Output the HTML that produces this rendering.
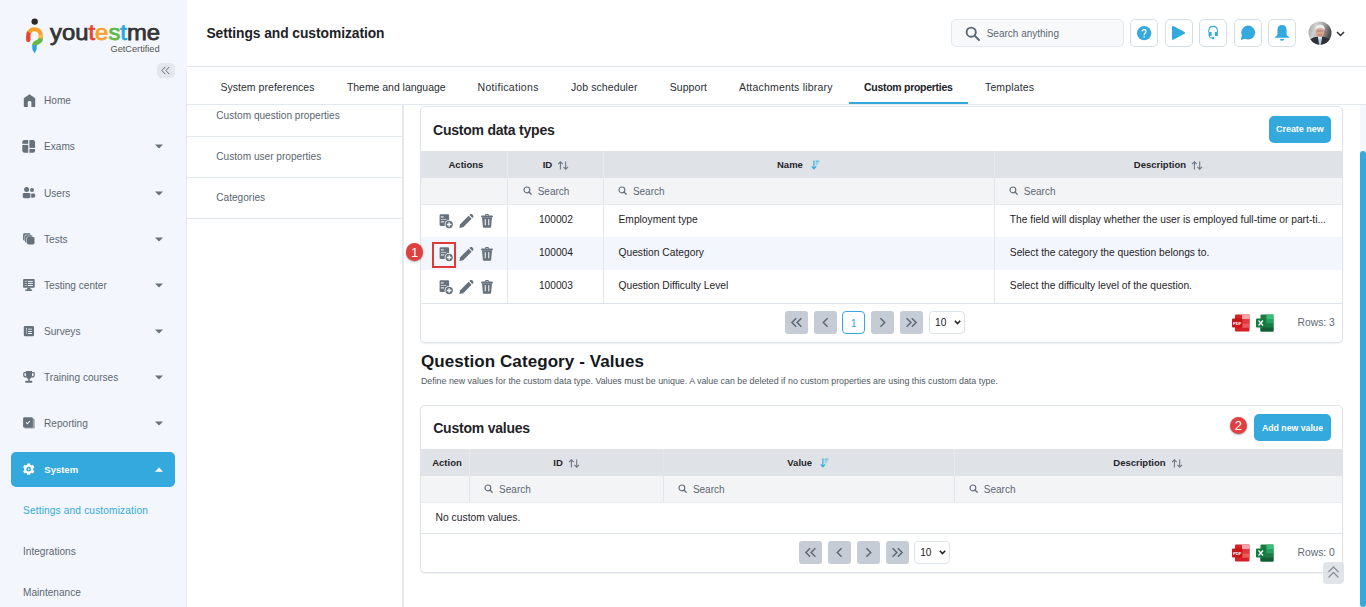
<!DOCTYPE html>
<html><head><meta charset="utf-8"><style>
html,body{margin:0;padding:0;width:1366px;height:607px;overflow:hidden;background:#fff;font-family:"Liberation Sans", sans-serif}
.t{position:absolute;white-space:nowrap;line-height:1;font-family:"Liberation Sans", sans-serif}
.r{position:absolute;display:block}
</style></head><body>
<div class="r" style="left:0px;top:0px;width:187px;height:607px;background:#f3f6fc"></div>
<div class="r" style="left:186px;top:72px;width:1px;height:535px;background:#e6eaf0"></div>
<svg class="r" style="left:24px;top:16px" width="22" height="40" viewBox="0 0 22 40">
<circle cx="10.7" cy="5.6" r="3.2" fill="#2b2b2b"/>
<path d="M5.13 16.4 A6.2 6.2 0 0 0 4.3 19.5 L4.3 24" stroke="#e8432f" stroke-width="4.3" stroke-linecap="round"/>
<path d="M5.13 16.4 A6.2 6.2 0 0 1 16.7 19.5" stroke="#f7a12b" stroke-width="4" fill="none"/>
<path d="M16.7 19.3 L16.7 22.5" stroke="#fbbd33" stroke-width="4.6"/>
<path d="M16.7 22.3 Q16.7 25 13.5 26.3 Q10.5 27.3 10.5 29.5" stroke="#64b946" stroke-width="4.6" fill="none"/>
<path d="M8.2 29 L12.8 29 L12.6 33.5 L10.6 37.2 L8.4 33.5 Z" fill="#2ea3e3"/>
</svg>
<div class="t" style="left:50px;top:21.5px;font-size:22px;font-weight:400;letter-spacing:0px;line-height:22px;color:#333;-webkit-text-stroke:0.75px currentColor;transform:scaleX(1.084);transform-origin:0 0">you<span style="color:#e5442e">t</span><span style="color:#f7a12b">e</span><span style="color:#5fbb46">s</span><span style="color:#2aa6e0">t</span>me</div>
<div class="t" style="left:110.5px;top:44.63px;font-size:9.3px;font-weight:400;color:#555;letter-spacing:-0.05px">GetCertified</div>
<div class="r" style="left:157px;top:63px;width:18px;height:15px;background:#e4e7eb;border-radius:5px"></div>
<svg class="r" style="left:161px;top:66px" width="10" height="9" viewBox="0 0 10 9"><path d="M4.3 0.9 L0.9 4.5 L4.3 8.1 M8.3 0.9 L4.9 4.5 L8.3 8.1" stroke="#5f6a75" stroke-width="1" fill="none"/></svg>
<div class="t" style="left:44px;top:95.95px;font-size:10.1px;font-weight:400;color:#5d6873;">Home</div>
<div class="t" style="left:44px;top:141.95px;font-size:10.1px;font-weight:400;color:#5d6873;">Exams</div>
<svg class="r" style="left:155px;top:144.0px" width="8" height="5" viewBox="0 0 8 5"><path d="M0 0.5 L8 0.5 L4 4.5 Z" fill="#66717c"/></svg>
<div class="t" style="left:44px;top:188.95px;font-size:10.1px;font-weight:400;color:#5d6873;">Users</div>
<svg class="r" style="left:155px;top:191.0px" width="8" height="5" viewBox="0 0 8 5"><path d="M0 0.5 L8 0.5 L4 4.5 Z" fill="#66717c"/></svg>
<div class="t" style="left:44px;top:234.95px;font-size:10.1px;font-weight:400;color:#5d6873;">Tests</div>
<svg class="r" style="left:155px;top:237.0px" width="8" height="5" viewBox="0 0 8 5"><path d="M0 0.5 L8 0.5 L4 4.5 Z" fill="#66717c"/></svg>
<div class="t" style="left:44px;top:280.95px;font-size:10.1px;font-weight:400;color:#5d6873;">Testing center</div>
<svg class="r" style="left:155px;top:283.0px" width="8" height="5" viewBox="0 0 8 5"><path d="M0 0.5 L8 0.5 L4 4.5 Z" fill="#66717c"/></svg>
<div class="t" style="left:44px;top:326.95px;font-size:10.1px;font-weight:400;color:#5d6873;">Surveys</div>
<svg class="r" style="left:155px;top:329.0px" width="8" height="5" viewBox="0 0 8 5"><path d="M0 0.5 L8 0.5 L4 4.5 Z" fill="#66717c"/></svg>
<div class="t" style="left:44px;top:372.95px;font-size:10.1px;font-weight:400;color:#5d6873;">Training courses</div>
<svg class="r" style="left:155px;top:375.0px" width="8" height="5" viewBox="0 0 8 5"><path d="M0 0.5 L8 0.5 L4 4.5 Z" fill="#66717c"/></svg>
<div class="t" style="left:44px;top:418.95px;font-size:10.1px;font-weight:400;color:#5d6873;">Reporting</div>
<svg class="r" style="left:155px;top:421.0px" width="8" height="5" viewBox="0 0 8 5"><path d="M0 0.5 L8 0.5 L4 4.5 Z" fill="#66717c"/></svg>
<svg class="r" style="left:23px;top:94px" width="13" height="14" viewBox="0 0 13 14"><path d="M6.5 0.2 L12.2 4.3 L12.2 12.2 Q12.2 12.9 11.5 12.9 L8.4 12.9 L8.4 8.2 Q8.4 6.9 6.6 6.9 Q4.8 6.9 4.8 8.2 L4.8 12.9 L1.5 12.9 Q0.8 12.9 0.8 12.2 L0.8 4.3 Z" fill="#66717c"/></svg>
<svg class="r" style="left:22px;top:140px" width="14" height="14" viewBox="0 0 14 14"><defs><clipPath id="exc"><rect x="0.3" y="0.1" width="12.8" height="12.7" rx="2.2"/></clipPath></defs><g clip-path="url(#exc)" fill="#66717c"><rect x="0" y="0" width="6.2" height="3.8"/><rect x="0" y="4.9" width="6.2" height="9"/><rect x="7.4" y="0" width="6" height="7.9"/><rect x="7.4" y="9" width="6" height="4"/></g></svg>
<svg class="r" style="left:22px;top:186px" width="14" height="13" viewBox="0 0 14 13"><circle cx="4.6" cy="3.6" r="2.5" fill="#66717c"/><circle cx="10" cy="4.1" r="2" fill="#66717c"/><path d="M2.2 6.9 L7 6.9 Q8.4 6.9 8.4 8.3 L8.4 10.8 Q8.4 12.3 4.6 12.3 Q0.8 12.3 0.8 10.8 L0.8 8.3 Q0.8 6.9 2.2 6.9 Z" fill="#66717c"/><path d="M9.2 7.4 L11.8 7.4 Q13.1 7.4 13.1 8.7 L13.1 10.5 Q13.1 11.7 10.5 11.7 L9.2 11.7 Z" fill="#66717c"/></svg>
<svg class="r" style="left:22px;top:232px" width="14" height="14" viewBox="0 0 14 14"><rect x="1.1" y="1.3" width="7.4" height="7.4" rx="1.4" fill="#66717c"/><rect x="2.6" y="2.8" width="8.5" height="8.5" rx="1.4" fill="#f3f6fc"/><rect x="3.1" y="3.3" width="7.4" height="7.4" rx="1.4" fill="#66717c"/><rect x="4.5" y="4.7" width="8.5" height="8.5" rx="1.4" fill="#f3f6fc"/><rect x="5" y="5.1" width="7.5" height="7.4" rx="1.4" fill="#66717c"/></svg>
<svg class="r" style="left:22px;top:278px" width="14" height="14" viewBox="0 0 14 14"><rect x="1.1" y="1.1" width="11.6" height="8.7" rx="0.8" fill="#66717c"/><path d="M2.9 3.2 L3.6 3.9 L4.8 2.7 M2.9 5.3 L3.6 6 L4.8 4.8 M2.9 7.4 L3.6 8.1 L4.8 6.9" stroke="#f3f6fc" stroke-width="0.8" fill="none"/><rect x="5.9" y="2.9" width="4.9" height="1" fill="#f3f6fc"/><rect x="5.9" y="4.9" width="4.9" height="1" fill="#f3f6fc"/><rect x="5.9" y="7" width="4.9" height="1" fill="#f3f6fc"/><path d="M5.4 9.8 L8.4 9.8 L8.8 11.7 L5 11.7 Z" fill="#66717c"/><rect x="3.1" y="11.6" width="7.1" height="1.3" rx="0.6" fill="#66717c"/></svg>
<svg class="r" style="left:23px;top:325px" width="12" height="12" viewBox="0 0 12 12"><rect x="0.8" y="0.9" width="10.2" height="10.3" rx="1.3" fill="#66717c"/><rect x="3" y="2.9" width="1" height="1.9" fill="#f3f6fc" opacity="0.7"/><rect x="3" y="5.5" width="1" height="1" fill="#f3f6fc"/><rect x="3" y="7.6" width="1" height="1" fill="#f3f6fc"/><rect x="5.1" y="3.6" width="3.8" height="1.3" fill="#f3f6fc" opacity="0.7"/><rect x="5.1" y="6.1" width="3.8" height="0.9" fill="#f3f6fc"/><rect x="5.1" y="8" width="3.8" height="1" fill="#f3f6fc"/></svg>
<svg class="r" style="left:23px;top:370px" width="12" height="14" viewBox="0 0 12 14"><path d="M2.9 1.1 L9 1.1 L9 5.8 Q9 8.9 5.95 8.9 Q2.9 8.9 2.9 5.8 Z" fill="#66717c"/><path d="M3 2.6 L1.4 2.6 Q0.8 2.6 0.8 3.3 L0.8 5.2 Q0.8 6.9 3 6.9 M8.9 2.6 L10.5 2.6 Q11.2 2.6 11.2 3.3 L11.2 5.2 Q11.2 6.9 8.9 6.9" stroke="#66717c" stroke-width="1.2" fill="none"/><rect x="5.2" y="8.5" width="1.5" height="2.5" fill="#66717c"/><rect x="2.3" y="10.8" width="6.8" height="2" rx="0.4" fill="#66717c"/></svg>
<svg class="r" style="left:22px;top:416px" width="14" height="14" viewBox="0 0 14 14"><rect x="2.6" y="2.5" width="10.1" height="10.1" rx="1.2" fill="#9aa3ac"/><rect x="1.1" y="1.3" width="9.7" height="10.2" rx="1.2" fill="#66717c"/><path d="M4 6.4 L5.4 7.8 L7.9 5" stroke="#f3f6fc" stroke-width="1.1" fill="none"/></svg>
<div class="r" style="left:11px;top:452px;width:164px;height:35px;background:#34a9de;border-radius:5px"></div>
<div class="t" style="left:44.3px;top:465.46px;font-size:9.5px;font-weight:700;color:#fff;">System</div>
<svg class="r" style="left:22px;top:463px" width="14" height="13" viewBox="0 0 14 13"><g transform="translate(6.7,6.2)" fill="#fff">
<path d="M-1.4 -5.6 L1.4 -5.6 L1.7 -4.2 L3 -3.6 L4.2 -4.4 L5.6 -2 L4.5 -1 L4.5 1 L5.6 2 L4.2 4.4 L3 3.6 L1.7 4.2 L1.4 5.6 L-1.4 5.6 L-1.7 4.2 L-3 3.6 L-4.2 4.4 L-5.6 2 L-4.5 1 L-4.5 -1 L-5.6 -2 L-4.2 -4.4 L-3 -3.6 L-1.7 -4.2 Z"/>
<circle r="2.4" fill="#34a9de"/><path d="M-0.6 -1.3 L1.1 0 L-0.6 1.3 Z" fill="#fff"/></g></svg>
<svg class="r" style="left:155px;top:467px" width="8" height="5" viewBox="0 0 8 5"><path d="M0 4.7 L8 4.7 L4 0.5 Z" fill="#fff"/></svg>
<div class="t" style="left:23px;top:505.95px;font-size:10.1px;font-weight:400;color:#34a9de;letter-spacing:0.17px">Settings and customization</div>
<div class="t" style="left:23px;top:546.95px;font-size:10.1px;font-weight:400;color:#5d6873;">Integrations</div>
<div class="t" style="left:23px;top:587.95px;font-size:10.1px;font-weight:400;color:#5d6873;">Maintenance</div>
<div class="r" style="left:187px;top:0px;width:1179px;height:66px;background:#fff"></div>
<div class="r" style="left:187px;top:66px;width:1179px;height:1px;background:#e3e8ee"></div>
<div class="t" style="left:206.4px;top:27.02px;font-size:13.8px;font-weight:700;color:#1d2227;letter-spacing:-0.05px">Settings and customization</div>
<div class="r" style="left:951px;top:19px;width:173px;height:27.5px;background:#f8f9fb;border:1px solid #e4e8ed;border-radius:5px;box-sizing:border-box"></div>
<svg class="r" style="left:965px;top:26px" width="16" height="16" viewBox="0 0 16 16"><circle cx="6.2" cy="6.2" r="4.6" stroke="#5a6670" stroke-width="1.9" fill="none"/><path d="M9.6 9.6 L14 14" stroke="#5a6670" stroke-width="2" stroke-linecap="round"/></svg>
<div class="t" style="left:986.7px;top:28.54px;font-size:10px;font-weight:400;color:#5d6873;">Search anything</div>
<div class="r" style="left:1130px;top:18.8px;width:28.3px;height:28.6px;border:1px solid #d5dde7;border-radius:5px;box-sizing:border-box;background:#fff"></div>
<div class="r" style="left:1164.5px;top:18.8px;width:28.3px;height:28.6px;border:1px solid #d5dde7;border-radius:5px;box-sizing:border-box;background:#fff"></div>
<div class="r" style="left:1199px;top:18.8px;width:28.3px;height:28.6px;border:1px solid #d5dde7;border-radius:5px;box-sizing:border-box;background:#fff"></div>
<div class="r" style="left:1233.5px;top:18.8px;width:28.3px;height:28.6px;border:1px solid #d5dde7;border-radius:5px;box-sizing:border-box;background:#fff"></div>
<div class="r" style="left:1268px;top:18.8px;width:28.3px;height:28.6px;border:1px solid #d5dde7;border-radius:5px;box-sizing:border-box;background:#fff"></div>
<svg class="r" style="left:1137px;top:25.7px" width="15" height="15" viewBox="0 0 15 15"><circle cx="7.15" cy="7.2" r="7.15" fill="#34a9de"/><path d="M5.2 5.5 Q5.2 3.6 7.15 3.6 Q9.1 3.6 9.1 5.3 Q9.1 6.5 8 7.2 Q7.15 7.8 7.15 9.2" stroke="#fff" stroke-width="1.25" fill="none"/><rect x="6.5" y="10.3" width="1.3" height="1.25" fill="#fff"/></svg>
<svg class="r" style="left:1171px;top:25px" width="16" height="16" viewBox="0 0 16 16"><path d="M1.9 1.9 L13.2 7.9 L1.9 13.9 Z" fill="#34a9de" stroke="#34a9de" stroke-width="1.8" stroke-linejoin="round"/></svg>
<svg class="r" style="left:1207px;top:25px" width="12" height="16" viewBox="0 0 12 16"><path d="M1.8 7.5 L1.8 5.6 Q1.8 1.4 6.1 1.4 Q10.4 1.4 10.4 5.6 L10.4 7.5" stroke="#34a9de" stroke-width="1.1" fill="none"/><rect x="1.6" y="6.9" width="3" height="4" rx="0.5" fill="#34a9de"/><rect x="7.8" y="6.9" width="3" height="4" rx="0.5" fill="#34a9de"/><path d="M2.1 10.6 Q2.1 13.1 5.2 13.1" stroke="#34a9de" stroke-width="1" fill="none"/><circle cx="6.1" cy="13.1" r="1.3" fill="#34a9de"/></svg>
<svg class="r" style="left:1240px;top:25px" width="16" height="16" viewBox="0 0 16 16"><circle cx="8.2" cy="7.6" r="7" fill="#34a9de"/><path d="M0.8 15 L2 10 L6 13.6 Z" fill="#34a9de"/></svg>
<svg class="r" style="left:1274px;top:24px" width="16" height="18" viewBox="0 0 16 18"><path d="M8 1 Q12.6 1 12.6 6.4 L12.6 10.6 Q12.8 11.6 15.2 13.2 Q15.5 13.7 15 13.8 L1 13.8 Q0.5 13.7 0.8 13.2 Q3.2 11.6 3.4 10.6 L3.4 6.4 Q3.4 1 8 1 Z" fill="#34a9de"/><path d="M5.8 14.9 L10.2 14.9 Q9.6 16.8 8 16.8 Q6.4 16.8 5.8 14.9 Z" fill="#34a9de"/></svg>
<svg class="r" style="left:1308px;top:21px" width="24" height="24" viewBox="0 0 24 24"><defs><clipPath id="av"><circle cx="12" cy="12" r="11.5"/></clipPath><linearGradient id="avbg" x1="0" y1="0" x2="1" y2="0.3"><stop offset="0" stop-color="#8e8e8e"/><stop offset="0.35" stop-color="#d2d2d2"/><stop offset="0.7" stop-color="#9a9a9a"/><stop offset="1" stop-color="#4a4a4a"/></linearGradient></defs>
<g clip-path="url(#av)"><rect width="24" height="24" fill="url(#avbg)"/>
<path d="M0 24 L1.5 19.5 Q3 17 7.5 16 L16.5 16 Q21 17 22.5 19.5 L24 24 Z" fill="#2e3138"/>
<path d="M10 16 L14 16 L12.8 24 L11.2 24 Z" fill="#eef2f6"/><path d="M11.5 17.2 L12.5 17.2 L12.9 24 L11.1 24 Z" fill="#9dbfe3"/>
<ellipse cx="12" cy="11" rx="4.2" ry="5" fill="#dba58f"/><path d="M7.2 10 Q6.8 3.6 12 3.6 Q17.2 3.6 16.8 10 Q16 7 12 6.9 Q8 7 7.2 10 Z" fill="#ececec"/>
<rect x="8.8" y="9.6" width="6.4" height="0.9" fill="#6d5a55" opacity="0.5"/><path d="M9.8 13.6 Q12 14.8 14.2 13.6" stroke="#b46a5a" stroke-width="0.7" fill="none"/></g></svg>
<svg class="r" style="left:1336px;top:31px" width="9" height="6" viewBox="0 0 9 6"><path d="M1 1 L4.5 4.5 L8 1" stroke="#2b3036" stroke-width="1.5" fill="none"/></svg>
<div class="r" style="left:187px;top:67px;width:1179px;height:37px;background:#fff"></div>
<div class="r" style="left:187px;top:104px;width:1179px;height:1px;background:#e3e8ee"></div>
<div class="t" style="left:220.4px;top:82.11px;font-size:10.5px;font-weight:400;color:#2a2f35;letter-spacing:0.04px">System preferences</div>
<div class="t" style="left:346.9px;top:82.11px;font-size:10.5px;font-weight:400;color:#2a2f35;letter-spacing:-0.03px">Theme and language</div>
<div class="t" style="left:477.6px;top:82.11px;font-size:10.5px;font-weight:400;color:#2a2f35;letter-spacing:0.3px">Notifications</div>
<div class="t" style="left:570.9px;top:82.11px;font-size:10.5px;font-weight:400;color:#2a2f35;letter-spacing:0.1px">Job scheduler</div>
<div class="t" style="left:669.7px;top:82.11px;font-size:10.5px;font-weight:400;color:#2a2f35;letter-spacing:0.08px">Support</div>
<div class="t" style="left:739px;top:82.11px;font-size:10.5px;font-weight:400;color:#2a2f35;letter-spacing:0.2px">Attachments library</div>
<div class="t" style="left:985px;top:82.11px;font-size:10.5px;font-weight:400;color:#2a2f35;letter-spacing:0.14px">Templates</div>
<div class="t" style="left:864px;top:82.11px;font-size:10.5px;font-weight:700;color:#1d2227;letter-spacing:-0.28px">Custom properties</div>
<div class="r" style="left:849px;top:102px;width:119px;height:2px;background:#34a9de"></div>
<div class="r" style="left:187px;top:105px;width:1179px;height:502px;background:#fff"></div>
<div class="r" style="left:402px;top:105px;width:1.5px;height:502px;background:#e6eaf0"></div>
<div class="r" style="left:187px;top:136px;width:215px;height:1px;background:#e3e8ee"></div>
<div class="r" style="left:187px;top:177px;width:215px;height:1px;background:#e3e8ee"></div>
<div class="r" style="left:187px;top:218px;width:215px;height:1px;background:#e3e8ee"></div>
<div class="t" style="left:216.3px;top:110.75px;font-size:10.1px;font-weight:400;color:#5b6670;">Custom question properties</div>
<div class="t" style="left:216.3px;top:151.85px;font-size:10.1px;font-weight:400;color:#5b6670;">Custom user properties</div>
<div class="t" style="left:216.3px;top:192.65px;font-size:10.1px;font-weight:400;color:#5b6670;">Categories</div>
<div class="r" style="left:1359.5px;top:105px;width:6.5px;height:502px;background:#f4f7fc"></div>
<div class="r" style="left:1360px;top:151px;width:6px;height:455.5px;background:#34a9de;border-radius:3px"></div>
<div class="r" style="left:420px;top:106px;width:923px;height:237px;border:1px solid #dfe4ea;border-radius:5px;box-sizing:border-box;background:#fff;box-shadow:0 1px 1.5px rgba(0,0,0,0.07)"></div>
<div class="t" style="left:433px;top:122.95px;font-size:14px;font-weight:700;color:#1f2429;letter-spacing:-0.22px">Custom data types</div>
<div class="r" style="left:1269px;top:116px;width:62px;height:27px;background:#34a9de;border-radius:5px"></div>
<div class="t" style="left:1275.8px;top:124.20px;font-size:9.8px;font-weight:700;color:#fff;transform:scaleX(0.912);transform-origin:0 0">Create new</div>
<div class="r" style="left:421px;top:151px;width:921px;height:27px;background:#dfe2e6"></div>
<div class="r" style="left:421px;top:178px;width:921px;height:26px;background:#f3f4f6"></div>
<div class="r" style="left:421px;top:237px;width:921px;height:33px;background:#f3f6fc"></div>
<div class="r" style="left:507px;top:151px;width:1px;height:27px;background:#e8ebee"></div>
<div class="r" style="left:507px;top:178px;width:1px;height:125px;background:#e3e7ec"></div>
<div class="r" style="left:603px;top:151px;width:1px;height:27px;background:#e8ebee"></div>
<div class="r" style="left:603px;top:178px;width:1px;height:125px;background:#e3e7ec"></div>
<div class="r" style="left:994px;top:151px;width:1px;height:27px;background:#e8ebee"></div>
<div class="r" style="left:994px;top:178px;width:1px;height:125px;background:#e3e7ec"></div>
<div class="r" style="left:421px;top:303px;width:921px;height:1px;background:#dfe4ea"></div>
<div class="r" style="left:421px;top:203.5px;width:921px;height:0.8px;background:#e9ecef"></div>
<div class="t" style="left:448.5px;top:160.26px;font-size:9.5px;font-weight:700;color:#1f2429;">Actions</div>
<div class="t" style="left:542.7px;top:160.26px;font-size:9.5px;font-weight:700;color:#1f2429;">ID</div>
<svg class="r" style="left:557px;top:160.5px" width="12" height="10" viewBox="0 0 12 10"><path d="M3.4 8.4 L3.4 0.9 M1.1 3.1 L3.4 0.8 L5.7 3.1" stroke="#6b7581" stroke-width="1.05" fill="none"/><path d="M8.7 0.6 L8.7 8.1 M6.4 5.9 L8.7 8.2 L11 5.9" stroke="#6b7581" stroke-width="1.05" fill="none"/></svg>
<div class="t" style="left:777px;top:160.26px;font-size:9.5px;font-weight:700;color:#1f2429;">Name</div>
<svg class="r" style="left:810.5px;top:159.5px" width="9" height="10" viewBox="0 0 9 10"><path d="M2.9 0.5 L2.9 8.6 M0.7 6.4 L2.9 8.8 L5.1 6.4" stroke="#34a9de" stroke-width="1.15" fill="none"/><rect x="4.6" y="0.5" width="3.8" height="1.3" fill="#5dbbe6"/><rect x="4.6" y="2.4" width="2.8" height="1.2" fill="#6cc1e8"/><rect x="4.6" y="4.2" width="1.8" height="1.1" fill="#7cc8ec"/></svg>
<div class="t" style="left:1133.8px;top:160.26px;font-size:9.5px;font-weight:700;color:#1f2429;">Description</div>
<svg class="r" style="left:1191px;top:160.5px" width="12" height="10" viewBox="0 0 12 10"><path d="M3.4 8.4 L3.4 0.9 M1.1 3.1 L3.4 0.8 L5.7 3.1" stroke="#6b7581" stroke-width="1.05" fill="none"/><path d="M8.7 0.6 L8.7 8.1 M6.4 5.9 L8.7 8.2 L11 5.9" stroke="#6b7581" stroke-width="1.05" fill="none"/></svg>
<svg class="r" style="left:522.5px;top:186px" width="10" height="10" viewBox="0 0 10 10"><circle cx="3.9" cy="3.9" r="2.9" stroke="#66717c" stroke-width="1.15" fill="none"/><path d="M6 6 L8.2 8.3" stroke="#66717c" stroke-width="1.3" stroke-linecap="round"/></svg>
<div class="t" style="left:537.7px;top:186.63px;font-size:10px;font-weight:400;color:#5d6873;">Search</div>
<svg class="r" style="left:618px;top:186px" width="10" height="10" viewBox="0 0 10 10"><circle cx="3.9" cy="3.9" r="2.9" stroke="#66717c" stroke-width="1.15" fill="none"/><path d="M6 6 L8.2 8.3" stroke="#66717c" stroke-width="1.3" stroke-linecap="round"/></svg>
<div class="t" style="left:632.9px;top:186.63px;font-size:10px;font-weight:400;color:#5d6873;">Search</div>
<svg class="r" style="left:1009px;top:186px" width="10" height="10" viewBox="0 0 10 10"><circle cx="3.9" cy="3.9" r="2.9" stroke="#66717c" stroke-width="1.15" fill="none"/><path d="M6 6 L8.2 8.3" stroke="#66717c" stroke-width="1.3" stroke-linecap="round"/></svg>
<div class="t" style="left:1023.8px;top:186.63px;font-size:10px;font-weight:400;color:#5d6873;">Search</div>
<div class="t" style="left:538.9px;top:215.07px;font-size:10.2px;font-weight:400;color:#1f2429;">100002</div>
<div class="t" style="left:618.5px;top:215.02px;font-size:10.25px;font-weight:400;color:#1f2429;">Employment type</div>
<div class="t" style="left:1009.8px;top:215.02px;font-size:10.25px;font-weight:400;color:#1f2429;">The field will display whether the user is employed full-time or part-ti...</div>
<svg class="r" style="left:438.5px;top:213.6px" width="15" height="15" viewBox="0 0 15 15"><rect x="0.6" y="0.3" width="9.5" height="11.6" rx="1.2" fill="#66717c"/>
<rect x="1.8" y="2.4" width="2.8" height="1" fill="#fff"/><rect x="1.8" y="4.9" width="5.6" height="1.1" fill="#fff" opacity="0.55"/><rect x="1.8" y="7.4" width="3.4" height="1" fill="#fff"/>
<circle cx="10.1" cy="10.5" r="4.5" fill="#fff"/><circle cx="10.1" cy="10.5" r="3.7" fill="#66717c"/><path d="M10.1 8.2 L10.1 12.8 M7.8 10.5 L12.4 10.5" stroke="#fff" stroke-width="1.3"/></svg>
<svg class="r" style="left:459.2px;top:213.6px" width="15" height="15" viewBox="0 0 15 15"><path d="M0.3 14.1 L1.2 10.2 L9.6 1.8 L12.6 4.8 L4.2 13.2 Z" fill="#66717c"/><path d="M10.4 1 L11.1 0.3 Q12.3 -0.6 13.5 0.6 L13.8 0.9 Q15 2.1 14.1 3.3 L13.4 4 Z" fill="#66717c"/></svg>
<svg class="r" style="left:481px;top:213.6px" width="12" height="14" viewBox="0 0 12 14"><path d="M0.2 2.2 Q0.2 1.6 0.9 1.6 L11.1 1.6 Q11.8 1.6 11.8 2.2 L11.8 3.3 L0.2 3.3 Z" fill="#66717c"/><path d="M4 1.8 L4 1.2 Q4 0.1 5.2 0.1 L6.8 0.1 Q8 0.1 8 1.2 L8 1.8 L6.9 1.8 L6.9 1.3 Q6.9 1 6.5 1 L5.5 1 Q5.1 1 5.1 1.3 L5.1 1.8 Z" fill="#66717c"/><path d="M1 3.3 L11 3.3 L10.1 13 Q10 13.8 9.1 13.8 L2.9 13.8 Q2 13.8 1.9 13 Z" fill="#66717c"/><rect x="3.7" y="5.1" width="1.1" height="6.2" fill="#fff" opacity="0.9"/><rect x="7.2" y="5.1" width="1.1" height="6.2" fill="#fff" opacity="0.9"/></svg>
<div class="t" style="left:538.9px;top:248.07px;font-size:10.2px;font-weight:400;color:#1f2429;">100004</div>
<div class="t" style="left:618.5px;top:248.02px;font-size:10.25px;font-weight:400;color:#1f2429;">Question Category</div>
<div class="t" style="left:1009.8px;top:248.02px;font-size:10.25px;font-weight:400;color:#1f2429;">Select the category the question belongs to.</div>
<svg class="r" style="left:438.5px;top:246.6px" width="15" height="15" viewBox="0 0 15 15"><rect x="0.6" y="0.3" width="9.5" height="11.6" rx="1.2" fill="#66717c"/>
<rect x="1.8" y="2.4" width="2.8" height="1" fill="#fff"/><rect x="1.8" y="4.9" width="5.6" height="1.1" fill="#fff" opacity="0.55"/><rect x="1.8" y="7.4" width="3.4" height="1" fill="#fff"/>
<circle cx="10.1" cy="10.5" r="4.5" fill="#fff"/><circle cx="10.1" cy="10.5" r="3.7" fill="#66717c"/><path d="M10.1 8.2 L10.1 12.8 M7.8 10.5 L12.4 10.5" stroke="#fff" stroke-width="1.3"/></svg>
<svg class="r" style="left:459.2px;top:246.6px" width="15" height="15" viewBox="0 0 15 15"><path d="M0.3 14.1 L1.2 10.2 L9.6 1.8 L12.6 4.8 L4.2 13.2 Z" fill="#66717c"/><path d="M10.4 1 L11.1 0.3 Q12.3 -0.6 13.5 0.6 L13.8 0.9 Q15 2.1 14.1 3.3 L13.4 4 Z" fill="#66717c"/></svg>
<svg class="r" style="left:481px;top:246.6px" width="12" height="14" viewBox="0 0 12 14"><path d="M0.2 2.2 Q0.2 1.6 0.9 1.6 L11.1 1.6 Q11.8 1.6 11.8 2.2 L11.8 3.3 L0.2 3.3 Z" fill="#66717c"/><path d="M4 1.8 L4 1.2 Q4 0.1 5.2 0.1 L6.8 0.1 Q8 0.1 8 1.2 L8 1.8 L6.9 1.8 L6.9 1.3 Q6.9 1 6.5 1 L5.5 1 Q5.1 1 5.1 1.3 L5.1 1.8 Z" fill="#66717c"/><path d="M1 3.3 L11 3.3 L10.1 13 Q10 13.8 9.1 13.8 L2.9 13.8 Q2 13.8 1.9 13 Z" fill="#66717c"/><rect x="3.7" y="5.1" width="1.1" height="6.2" fill="#fff" opacity="0.9"/><rect x="7.2" y="5.1" width="1.1" height="6.2" fill="#fff" opacity="0.9"/></svg>
<div class="t" style="left:538.9px;top:281.07px;font-size:10.2px;font-weight:400;color:#1f2429;">100003</div>
<div class="t" style="left:618.5px;top:281.02px;font-size:10.25px;font-weight:400;color:#1f2429;">Question Difficulty Level</div>
<div class="t" style="left:1009.8px;top:281.02px;font-size:10.25px;font-weight:400;color:#1f2429;">Select the difficulty level of the question.</div>
<svg class="r" style="left:438.5px;top:279.6px" width="15" height="15" viewBox="0 0 15 15"><rect x="0.6" y="0.3" width="9.5" height="11.6" rx="1.2" fill="#66717c"/>
<rect x="1.8" y="2.4" width="2.8" height="1" fill="#fff"/><rect x="1.8" y="4.9" width="5.6" height="1.1" fill="#fff" opacity="0.55"/><rect x="1.8" y="7.4" width="3.4" height="1" fill="#fff"/>
<circle cx="10.1" cy="10.5" r="4.5" fill="#fff"/><circle cx="10.1" cy="10.5" r="3.7" fill="#66717c"/><path d="M10.1 8.2 L10.1 12.8 M7.8 10.5 L12.4 10.5" stroke="#fff" stroke-width="1.3"/></svg>
<svg class="r" style="left:459.2px;top:279.6px" width="15" height="15" viewBox="0 0 15 15"><path d="M0.3 14.1 L1.2 10.2 L9.6 1.8 L12.6 4.8 L4.2 13.2 Z" fill="#66717c"/><path d="M10.4 1 L11.1 0.3 Q12.3 -0.6 13.5 0.6 L13.8 0.9 Q15 2.1 14.1 3.3 L13.4 4 Z" fill="#66717c"/></svg>
<svg class="r" style="left:481px;top:279.6px" width="12" height="14" viewBox="0 0 12 14"><path d="M0.2 2.2 Q0.2 1.6 0.9 1.6 L11.1 1.6 Q11.8 1.6 11.8 2.2 L11.8 3.3 L0.2 3.3 Z" fill="#66717c"/><path d="M4 1.8 L4 1.2 Q4 0.1 5.2 0.1 L6.8 0.1 Q8 0.1 8 1.2 L8 1.8 L6.9 1.8 L6.9 1.3 Q6.9 1 6.5 1 L5.5 1 Q5.1 1 5.1 1.3 L5.1 1.8 Z" fill="#66717c"/><path d="M1 3.3 L11 3.3 L10.1 13 Q10 13.8 9.1 13.8 L2.9 13.8 Q2 13.8 1.9 13 Z" fill="#66717c"/><rect x="3.7" y="5.1" width="1.1" height="6.2" fill="#fff" opacity="0.9"/><rect x="7.2" y="5.1" width="1.1" height="6.2" fill="#fff" opacity="0.9"/></svg>
<div class="r" style="left:432px;top:242px;width:24px;height:25.6px;border:2.5px solid #e0393a;box-sizing:border-box"></div>
<div class="r" style="left:405.75px;top:243.45000000000002px;width:17.7px;height:17.7px;border-radius:50%;background:#e0403f;box-shadow:0 1px 2px rgba(0,0,0,0.35)"></div>
<div class="t" style="left:405.75px;top:245.9px;width:17.7px;text-align:center;font-size:13px;color:#fff">1</div>
<div class="r" style="left:785px;top:311px;width:23px;height:23px;background:#c5ccd5;border-radius:3px"></div>
<div class="r" style="left:813.7px;top:311px;width:23px;height:23px;background:#c5ccd5;border-radius:3px"></div>
<div class="r" style="left:842.2px;top:311px;width:23.2px;height:23px;border:1px solid #34a9de;border-radius:4px;box-sizing:border-box;background:#fff"></div>
<div class="t" style="left:850.8000000000001px;top:317.71px;font-size:10.5px;font-weight:400;color:#34a9de;">1</div>
<div class="r" style="left:871.1px;top:311px;width:23px;height:23px;background:#c5ccd5;border-radius:3px"></div>
<div class="r" style="left:900px;top:311px;width:23px;height:23px;background:#c5ccd5;border-radius:3px"></div>
<svg class="r" style="left:785px;top:311px" width="23" height="23" viewBox="0 0 23 23"><path d="M11.2 7.3 L6.9 11.5 L11.2 15.7 M16.4 7.3 L12.1 11.5 L16.4 15.7" stroke="#5d6975" stroke-width="1.5" fill="none"/></svg>
<svg class="r" style="left:813.7px;top:311px" width="23" height="23" viewBox="0 0 23 23"><path d="M13.6 7.3 L9.3 11.5 L13.6 15.7" stroke="#5d6975" stroke-width="1.5" fill="none"/></svg>
<svg class="r" style="left:871.1px;top:311px" width="23" height="23" viewBox="0 0 23 23"><path d="M9.4 7.3 L13.7 11.5 L9.4 15.7" stroke="#5d6975" stroke-width="1.5" fill="none"/></svg>
<svg class="r" style="left:900px;top:311px" width="23" height="23" viewBox="0 0 23 23"><path d="M6.6 7.3 L10.9 11.5 L6.6 15.7 M11.8 7.3 L16.1 11.5 L11.8 15.7" stroke="#5d6975" stroke-width="1.5" fill="none"/></svg>
<div class="r" style="left:929px;top:311px;width:35.5px;height:23px;border:1px solid #dde3ea;border-radius:4px;box-sizing:border-box;background:#fff"></div>
<div class="t" style="left:935px;top:317.97px;font-size:10.2px;font-weight:400;color:#222;">10</div>
<svg class="r" style="left:954px;top:320px" width="7" height="5" viewBox="0 0 7 5"><path d="M0.8 0.8 L3.5 3.6 L6.2 0.8" stroke="#222" stroke-width="1.5" fill="none"/></svg>
<svg class="r" style="left:1231.5px;top:314px" width="18" height="18" viewBox="0 0 18 18"><rect x="3" y="0.5" width="14.5" height="17" rx="1" fill="#d71f26"/>
<rect x="10" y="0.5" width="7.5" height="4.5" fill="#f7a5a8"/><rect x="10" y="5" width="7.5" height="4.5" fill="#e0393f"/><rect x="10" y="9.5" width="7.5" height="4.2" fill="#f05a5e"/>
<rect x="0" y="4.5" width="10.5" height="9" rx="1" fill="#c8141b"/><text x="5.2" y="11" text-anchor="middle" font-family="Liberation Sans" font-weight="700" font-size="4.2" fill="#fff">PDF</text></svg>
<svg class="r" style="left:1256px;top:314px" width="18" height="18" viewBox="0 0 18 18"><rect x="4.5" y="0.5" width="13" height="17" rx="1" fill="#1f7a45"/>
<rect x="10.5" y="0.5" width="7" height="4.5" fill="#3bbd7a"/><rect x="10.5" y="5" width="7" height="4.5" fill="#24a060"/><rect x="10.5" y="9.5" width="7" height="4" fill="#1b7c48"/><rect x="4.5" y="13.5" width="13" height="4" fill="#145c33"/>
<rect x="0" y="4.5" width="9.5" height="9" rx="1" fill="#107c41"/><path d="M2.5 6.5 L7 11.5 M7 6.5 L2.5 11.5" stroke="#fff" stroke-width="1.3"/></svg>
<div class="t" style="left:1297.6px;top:317.88px;font-size:10.3px;font-weight:400;color:#5d6873;">Rows: 3</div>
<div class="t" style="left:420.9px;top:352.61px;font-size:17px;font-weight:700;color:#15191d;letter-spacing:0.08px">Question Category - Values</div>
<div class="t" style="left:420.9px;top:376.61px;font-size:8.85px;font-weight:400;color:#4f5a64;">Define new values for the custom data type. Values must be unique. A value can be deleted if no custom properties are using this custom data type.</div>
<div class="r" style="left:420px;top:405px;width:923px;height:168px;border:1px solid #dfe4ea;border-radius:5px;box-sizing:border-box;background:#fff;box-shadow:0 1px 1.5px rgba(0,0,0,0.07)"></div>
<div class="t" style="left:433.2px;top:420.85px;font-size:14px;font-weight:700;color:#1f2429;letter-spacing:-0.22px">Custom values</div>
<div class="r" style="left:1254px;top:414.3px;width:76.5px;height:26.7px;background:#34a9de;border-radius:5px"></div>
<div class="t" style="left:1262px;top:423.20px;font-size:9.8px;font-weight:700;color:#fff;transform:scaleX(0.889);transform-origin:0 0">Add new value</div>
<div class="r" style="left:1229.65px;top:416.65px;width:17.7px;height:17.7px;border-radius:50%;background:#e0403f;box-shadow:0 1px 2px rgba(0,0,0,0.35)"></div>
<div class="t" style="left:1229.65px;top:419.1px;width:17.7px;text-align:center;font-size:13px;color:#fff">2</div>
<div class="r" style="left:421px;top:449px;width:921px;height:26.7px;background:#dfe2e6"></div>
<div class="r" style="left:421px;top:475.7px;width:921px;height:26.3px;background:#f3f4f6"></div>
<div class="r" style="left:469px;top:449px;width:1px;height:26.7px;background:#e8ebee"></div>
<div class="r" style="left:663px;top:449px;width:1px;height:26.7px;background:#e3e6ea"></div>
<div class="r" style="left:954px;top:449px;width:1px;height:26.7px;background:#e8ebee"></div>
<div class="r" style="left:469px;top:475.7px;width:1px;height:26.3px;background:#e3e7ec"></div>
<div class="r" style="left:663px;top:475.7px;width:1px;height:26.3px;background:#e3e7ec"></div>
<div class="r" style="left:954px;top:475.7px;width:1px;height:26.3px;background:#e3e7ec"></div>
<div class="r" style="left:421px;top:502px;width:921px;height:0.8px;background:#e9ecef"></div>
<div class="r" style="left:421px;top:533px;width:921px;height:1px;background:#dfe4ea"></div>
<div class="t" style="left:432.2px;top:458.16px;font-size:9.5px;font-weight:700;color:#1f2429;">Action</div>
<div class="t" style="left:553.3px;top:458.16px;font-size:9.5px;font-weight:700;color:#1f2429;">ID</div>
<svg class="r" style="left:567.6px;top:458.5px" width="12" height="10" viewBox="0 0 12 10"><path d="M3.4 8.4 L3.4 0.9 M1.1 3.1 L3.4 0.8 L5.7 3.1" stroke="#6b7581" stroke-width="1.05" fill="none"/><path d="M8.7 0.6 L8.7 8.1 M6.4 5.9 L8.7 8.2 L11 5.9" stroke="#6b7581" stroke-width="1.05" fill="none"/></svg>
<div class="t" style="left:787.3px;top:458.16px;font-size:9.5px;font-weight:700;color:#1f2429;">Value</div>
<svg class="r" style="left:820px;top:457.5px" width="9" height="10" viewBox="0 0 9 10"><path d="M2.9 0.5 L2.9 8.6 M0.7 6.4 L2.9 8.8 L5.1 6.4" stroke="#34a9de" stroke-width="1.15" fill="none"/><rect x="4.6" y="0.5" width="3.8" height="1.3" fill="#5dbbe6"/><rect x="4.6" y="2.4" width="2.8" height="1.2" fill="#6cc1e8"/><rect x="4.6" y="4.2" width="1.8" height="1.1" fill="#7cc8ec"/></svg>
<div class="t" style="left:1113.3px;top:458.16px;font-size:9.5px;font-weight:700;color:#1f2429;">Description</div>
<svg class="r" style="left:1170.6px;top:458.5px" width="12" height="10" viewBox="0 0 12 10"><path d="M3.4 8.4 L3.4 0.9 M1.1 3.1 L3.4 0.8 L5.7 3.1" stroke="#6b7581" stroke-width="1.05" fill="none"/><path d="M8.7 0.6 L8.7 8.1 M6.4 5.9 L8.7 8.2 L11 5.9" stroke="#6b7581" stroke-width="1.05" fill="none"/></svg>
<svg class="r" style="left:484.3px;top:484px" width="10" height="10" viewBox="0 0 10 10"><circle cx="3.9" cy="3.9" r="2.9" stroke="#66717c" stroke-width="1.15" fill="none"/><path d="M6 6 L8.2 8.3" stroke="#66717c" stroke-width="1.3" stroke-linecap="round"/></svg>
<div class="t" style="left:499.1px;top:484.74px;font-size:10px;font-weight:400;color:#5d6873;">Search</div>
<svg class="r" style="left:678px;top:484px" width="10" height="10" viewBox="0 0 10 10"><circle cx="3.9" cy="3.9" r="2.9" stroke="#66717c" stroke-width="1.15" fill="none"/><path d="M6 6 L8.2 8.3" stroke="#66717c" stroke-width="1.3" stroke-linecap="round"/></svg>
<div class="t" style="left:692.9px;top:484.74px;font-size:10px;font-weight:400;color:#5d6873;">Search</div>
<svg class="r" style="left:969px;top:484px" width="10" height="10" viewBox="0 0 10 10"><circle cx="3.9" cy="3.9" r="2.9" stroke="#66717c" stroke-width="1.15" fill="none"/><path d="M6 6 L8.2 8.3" stroke="#66717c" stroke-width="1.3" stroke-linecap="round"/></svg>
<div class="t" style="left:983.8px;top:484.74px;font-size:10px;font-weight:400;color:#5d6873;">Search</div>
<div class="t" style="left:435.6px;top:513.18px;font-size:10.3px;font-weight:400;color:#1f2429;">No custom values.</div>
<div class="r" style="left:799.1px;top:540.6px;width:23px;height:23px;background:#c5ccd5;border-radius:3px"></div>
<div class="r" style="left:828px;top:540.6px;width:23px;height:23px;background:#c5ccd5;border-radius:3px"></div>
<div class="r" style="left:856.8px;top:540.6px;width:23px;height:23px;background:#c5ccd5;border-radius:3px"></div>
<div class="r" style="left:885.6px;top:540.6px;width:23px;height:23px;background:#c5ccd5;border-radius:3px"></div>
<svg class="r" style="left:799.1px;top:540.6px" width="23" height="23" viewBox="0 0 23 23"><path d="M11.2 7.3 L6.9 11.5 L11.2 15.7 M16.4 7.3 L12.1 11.5 L16.4 15.7" stroke="#5d6975" stroke-width="1.5" fill="none"/></svg>
<svg class="r" style="left:828px;top:540.6px" width="23" height="23" viewBox="0 0 23 23"><path d="M13.6 7.3 L9.3 11.5 L13.6 15.7" stroke="#5d6975" stroke-width="1.5" fill="none"/></svg>
<svg class="r" style="left:856.8px;top:540.6px" width="23" height="23" viewBox="0 0 23 23"><path d="M9.4 7.3 L13.7 11.5 L9.4 15.7" stroke="#5d6975" stroke-width="1.5" fill="none"/></svg>
<svg class="r" style="left:885.6px;top:540.6px" width="23" height="23" viewBox="0 0 23 23"><path d="M6.6 7.3 L10.9 11.5 L6.6 15.7 M11.8 7.3 L16.1 11.5 L11.8 15.7" stroke="#5d6975" stroke-width="1.5" fill="none"/></svg>
<div class="r" style="left:914.2px;top:540.6px;width:35.5px;height:23px;border:1px solid #dde3ea;border-radius:4px;box-sizing:border-box;background:#fff"></div>
<div class="t" style="left:920.2px;top:547.57px;font-size:10.2px;font-weight:400;color:#222;">10</div>
<svg class="r" style="left:939.2px;top:549.6px" width="7" height="5" viewBox="0 0 7 5"><path d="M0.8 0.8 L3.5 3.6 L6.2 0.8" stroke="#222" stroke-width="1.5" fill="none"/></svg>
<svg class="r" style="left:1231.5px;top:543.5px" width="18" height="18" viewBox="0 0 18 18"><rect x="3" y="0.5" width="14.5" height="17" rx="1" fill="#d71f26"/>
<rect x="10" y="0.5" width="7.5" height="4.5" fill="#f7a5a8"/><rect x="10" y="5" width="7.5" height="4.5" fill="#e0393f"/><rect x="10" y="9.5" width="7.5" height="4.2" fill="#f05a5e"/>
<rect x="0" y="4.5" width="10.5" height="9" rx="1" fill="#c8141b"/><text x="5.2" y="11" text-anchor="middle" font-family="Liberation Sans" font-weight="700" font-size="4.2" fill="#fff">PDF</text></svg>
<svg class="r" style="left:1256px;top:543.5px" width="18" height="18" viewBox="0 0 18 18"><rect x="4.5" y="0.5" width="13" height="17" rx="1" fill="#1f7a45"/>
<rect x="10.5" y="0.5" width="7" height="4.5" fill="#3bbd7a"/><rect x="10.5" y="5" width="7" height="4.5" fill="#24a060"/><rect x="10.5" y="9.5" width="7" height="4" fill="#1b7c48"/><rect x="4.5" y="13.5" width="13" height="4" fill="#145c33"/>
<rect x="0" y="4.5" width="9.5" height="9" rx="1" fill="#107c41"/><path d="M2.5 6.5 L7 11.5 M7 6.5 L2.5 11.5" stroke="#fff" stroke-width="1.3"/></svg>
<div class="t" style="left:1297.6px;top:548.08px;font-size:10.3px;font-weight:400;color:#5d6873;">Rows: 0</div>
<div class="r" style="left:1323px;top:562px;width:21px;height:21.6px;background:rgba(215,220,226,0.75);border-radius:4px"></div>
<svg class="r" style="left:1327px;top:565px" width="13" height="15" viewBox="0 0 13 15"><path d="M1.5 7 L6.5 2 L11.5 7 M1.5 12.5 L6.5 7.5 L11.5 12.5" stroke="#8a9097" stroke-width="1.3" fill="none"/></svg>
</body></html>
